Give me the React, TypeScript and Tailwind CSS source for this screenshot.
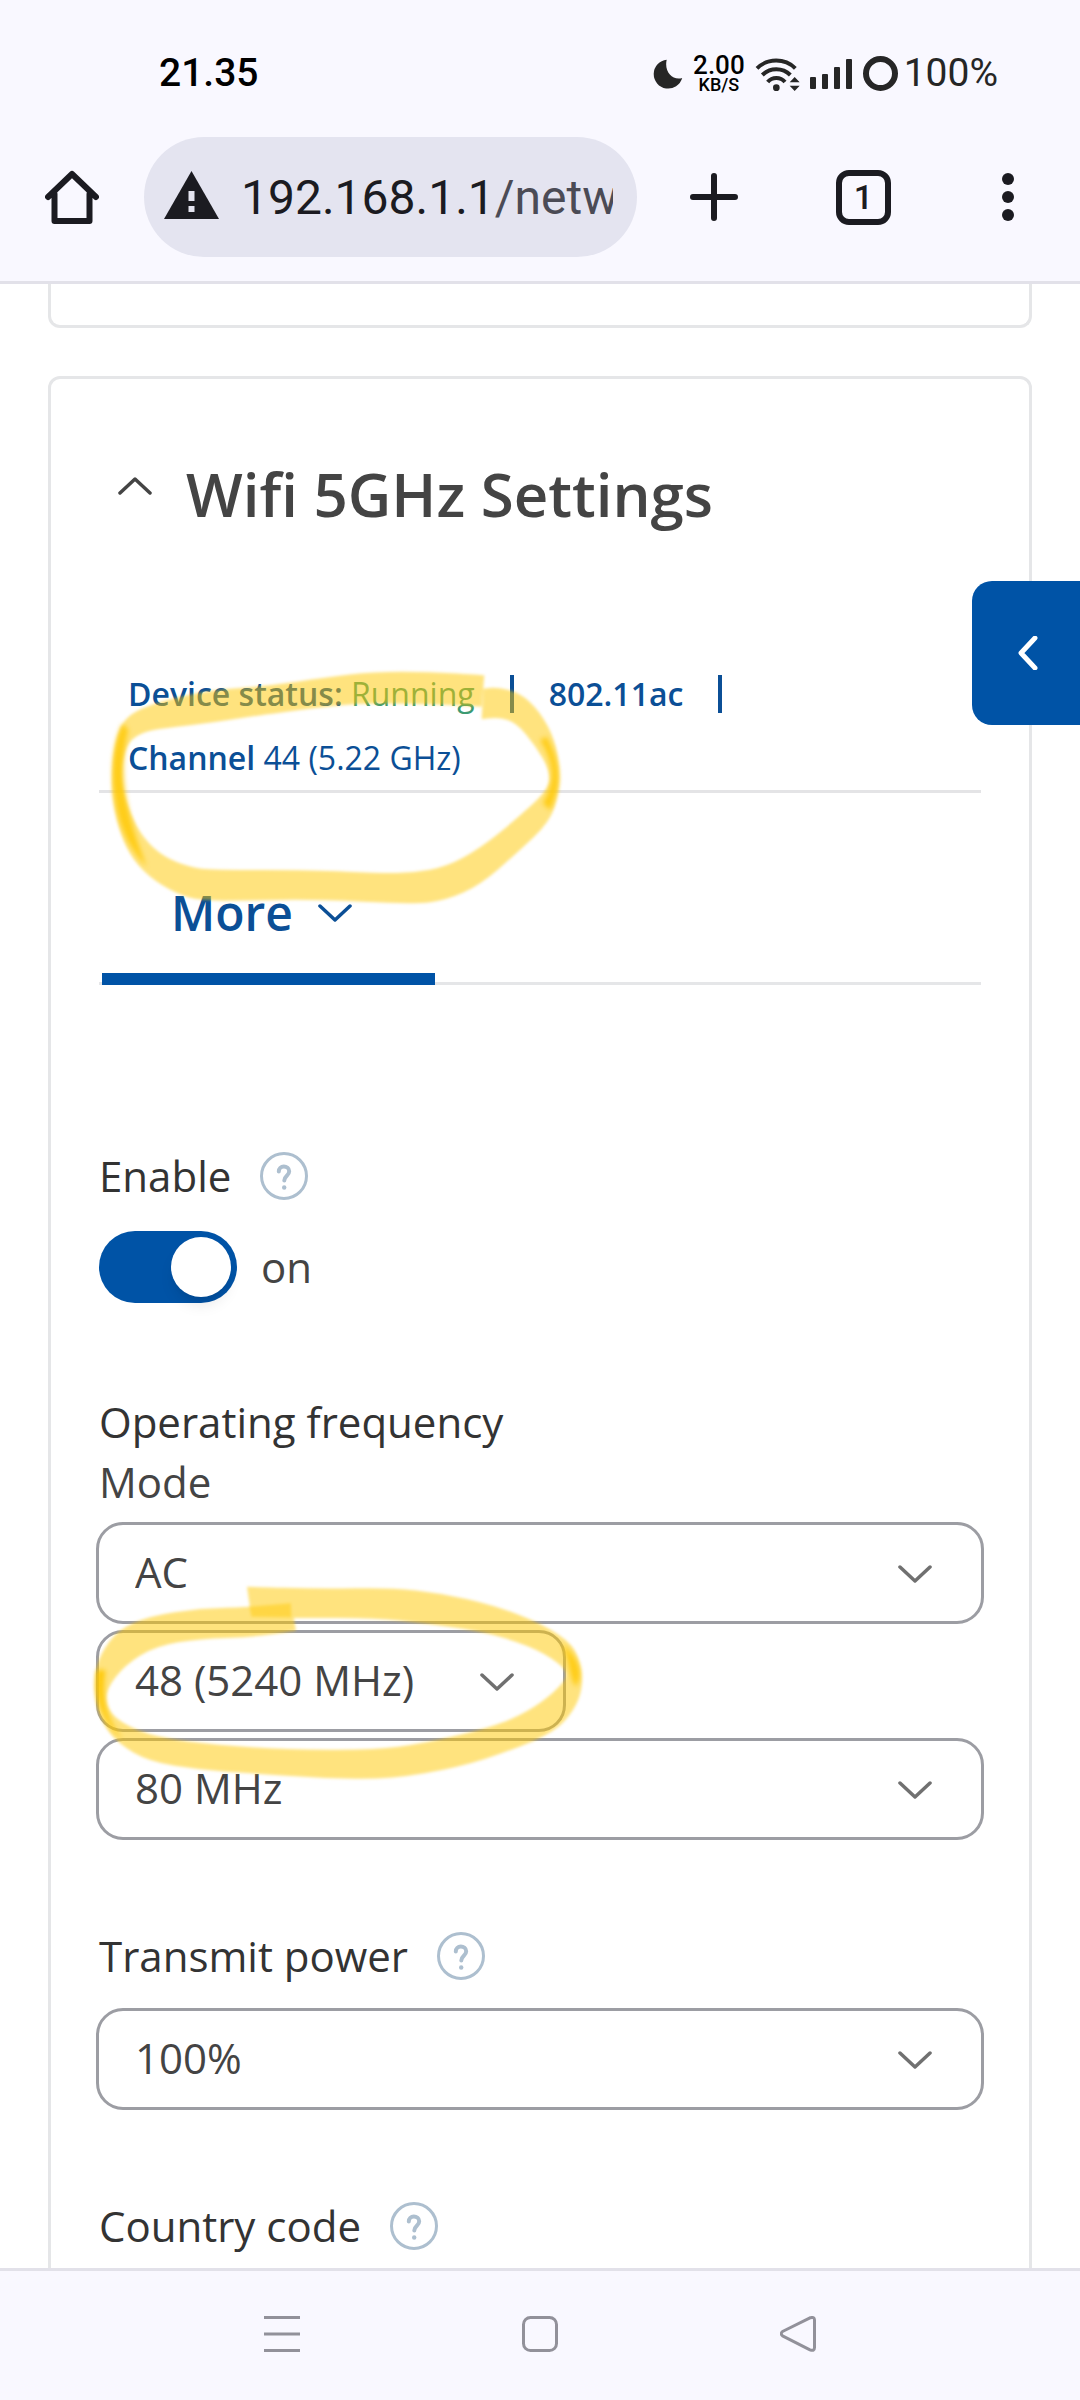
import { useState } from 'react';
import type { ReactNode } from 'react';

type Point = [number, number];

// Closed curve that runs smoothly through the midpoints of the given points
function smoothPath(points: Point[]) {
  const mid = (a: Point, b: Point) => `${(a[0] + b[0]) / 2} ${(a[1] + b[1]) / 2}`;
  const segments = points.map((p, i) => {
    const next = points[(i + 1) % points.length];
    return `Q${p[0]} ${p[1]} ${mid(p, next)}`;
  });
  return `M${mid(points[points.length - 1], points[0])} ${segments.join(' ')}Z`;
}

const STATUS_MARK: Point[] = [
  [1213, 106], [1213, 106], [1050, 95], [880, 95], [740, 112], [560, 138], [400, 150], [300, 170],
  [200, 198], [135, 232], [105, 300], [92, 430], [108, 540], [145, 640], [205, 710], [290, 762],
  [360, 782], [500, 782], [700, 778], [1000, 793], [1100, 780], [1200, 735], [1310, 640], [1410, 545],
  [1436, 460], [1440, 390], [1425, 300], [1380, 215], [1320, 158], [1250, 142], [1210, 146], [1210, 146],
  [1205, 237], [1205, 237], [1260, 232], [1310, 250], [1365, 315], [1411, 395], [1405, 450], [1300, 545],
  [1200, 625], [1100, 680], [1000, 698], [900, 700], [700, 690], [400, 690], [330, 682], [250, 650],
  [190, 595], [150, 520], [124, 440], [124, 370], [145, 305], [190, 276], [260, 263], [400, 248],
  [520, 228], [700, 205], [850, 188], [1100, 195], [1205, 200], [1205, 200],
];

const CHANNEL_MARK: Point[] = [
  [485, 230], [485, 230], [700, 237], [900, 233], [1050, 250], [1200, 285], [1340, 340], [1435, 405],
  [1457, 480], [1458, 540], [1435, 600], [1380, 665], [1250, 722], [1100, 772], [900, 808], [700, 805],
  [500, 790], [350, 780], [200, 755], [110, 700], [65, 640], [45, 580], [40, 500], [60, 430],
  [110, 360], [200, 318], [350, 295], [500, 292], [613, 278], [613, 278], [627, 362], [627, 362],
  [500, 382], [350, 386], [220, 408], [130, 465], [75, 540], [78, 595], [120, 640], [220, 682],
  [400, 705], [600, 718], [850, 720], [1000, 700], [1200, 650], [1300, 605], [1380, 545], [1424, 488],
  [1350, 430], [1250, 388], [1150, 362], [1000, 340], [850, 323], [600, 325], [497, 318], [497, 318],
];

function Chevron({ className, width = 5 }: { className: string; width?: number }) {
  return (
    <svg viewBox="0 0 34 20" className={className} fill="none" stroke="currentColor"
      strokeWidth={width * 0.7} strokeLinecap="round" strokeLinejoin="round">
      <path d="M2 3 17 17 32 3" />
    </svg>
  );
}

function HelpButton({ topic }: { topic: string }) {
  return (
    <button type="button" aria-label={`Help: ${topic}`} className="size-12 text-[#adbfcf]">
      <svg viewBox="0 0 48 48" className="size-12" fill="none" stroke="currentColor">
        <circle cx="24" cy="24" r="22.5" strokeWidth="3" />
        <path d="M18.8 19.5c0-3 2.2-4.9 5-4.9s5.4 1.9 5.4 4.7c0 4.6-4.9 4.3-4.9 9.2" strokeWidth="4" strokeLinecap="round" />
        <circle cx="24.2" cy="35.5" r="2.2" fill="currentColor" stroke="none" />
      </svg>
    </button>
  );
}

interface SelectBoxProps {
  label: string;
  id: string;
  options: string[];
  className?: string;
}

function SelectBox({ label, id, options, className = 'w-full' }: SelectBoxProps) {
  return (
    <div className={`relative ${className}`}>
      <select id={id} aria-label={label}
        className="block h-[102px] w-full appearance-none rounded-[27px] border-3 border-[#9c9da3] bg-white pr-24 pb-[3px] pl-9 text-[42px] text-[#444]">
        {options.map((o) => <option key={o}>{o}</option>)}
      </select>
      <Chevron className="pointer-events-none absolute top-[42px] right-[52px] h-5 w-[34px] text-[#707070]" />
    </div>
  );
}

function FieldLabel({ htmlFor, children }: { htmlFor: string; children: string }) {
  return (
    <div className="flex items-center gap-[29px]">
      <label htmlFor={htmlFor} className="text-[42px] leading-[60px] text-[#333]">{children}</label>
      <HelpButton topic={children} />
    </div>
  );
}

function StatusBar() {
  return (
    <div className="flex h-[137px] items-center justify-between pt-2.5 pr-[82px] pl-[159px] text-[39px] text-[#262626]">
      <span className="font-medium text-black">21.35</span>
      <div className="flex items-center">
        <svg viewBox="97 80 92 93" className="mr-2.5 size-[30px]" fill="currentColor">
          <path d="M139 82A45 45 0 1 0 187 139C158 148 130 120 139 82Z" />
        </svg>
        <div className="mr-2.5 flex flex-col items-center font-medium text-black">
          <span className="text-[26px] leading-[22px]">2.00</span>
          <span className="text-[18px] leading-[18px]">KB/S</span>
        </div>
        <svg viewBox="400 68 135 108" className="mr-2.5 h-9 w-[45px]" fill="none" stroke="currentColor" strokeWidth="12">
          <path d="M406 105A83 83 0 0 1 521 105M422 125A60 60 0 0 1 506 125M438 146A34 34 0 0 1 490 146" />
          <circle cx="464" cy="163" r="10" fill="currentColor" stroke="none" />
          <path d="M519 131 534 147H504ZM519 173 534 157H504Z" fill="currentColor" stroke="none" />
        </svg>
        <svg viewBox="0 0 43 30" className="mr-2.5 h-[30px] w-[43px]" fill="currentColor">
          <rect x="0" y="18" width="6" height="12" rx="1" />
          <rect x="12" y="15" width="6" height="15" rx="1" />
          <rect x="24" y="8" width="6" height="22" rx="1" />
          <rect x="36" y="0" width="6" height="30" rx="1" />
        </svg>
        <span className="mr-1.5 size-[35px] rounded-full border-[6px] border-[#262626]" />
        <span>100%</span>
      </div>
    </div>
  );
}

function BrowserToolbar() {
  return (
    <div className="flex items-center pr-[66px] pb-6 pl-[45px] text-[#1b1b21]">
      <button type="button" aria-label="Home">
        <svg viewBox="0 0 54 54" className="size-[54px]" fill="none" stroke="currentColor" strokeWidth="6" strokeLinecap="round" strokeLinejoin="round">
          <path d="M9.500 24V51H44.500V24M3 27 27 4 51 27" />
        </svg>
      </button>
      <button type="button" aria-label="Address"
        className="mx-[45px] flex h-[120px] min-w-0 flex-1 items-center rounded-full bg-[#e4e4f0] pr-6 pl-5 text-left">
        <svg viewBox="0 0 55 48" className="mb-1 h-12 w-[55px] shrink-0">
          <path d="M27.5 0 55 48H0Z" fill="currentColor" />
          <path d="M24.5 20h6v10h-6zM24.5 35h6v6h-6z" fill="#e4e4f0" />
        </svg>
        <span className="ml-[22px] min-w-0 flex-1 overflow-hidden pt-0.5 text-[48px] whitespace-nowrap">
          192.168.1.1<span className="text-[#4b4b55]">/network</span>
        </span>
      </button>
      <button type="button" aria-label="New tab" className="ml-2">
        <svg viewBox="0 0 48 48" className="size-12" stroke="currentColor" strokeWidth="6" strokeLinecap="round">
          <path d="M24 3V45M3 24H45" />
        </svg>
      </button>
      <button type="button" aria-label="Open tabs"
        className="ml-[98px] flex size-[55px] items-center justify-center rounded-[13px] border-[6px] border-current text-[34px] leading-none font-medium">
        1
      </button>
      <button type="button" aria-label="Menu" className="ml-[111px] flex flex-col gap-1.5">
        <span className="size-3 rounded-full bg-current" />
        <span className="size-3 rounded-full bg-current" />
        <span className="size-3 rounded-full bg-current" />
      </button>
    </div>
  );
}

function NavButton({ label, children }: { label: string; children: ReactNode }) {
  return (
    <button type="button" aria-label={label}>
      <svg viewBox="0 0 36 36" className="size-9" fill="none" stroke="#92919a" strokeWidth="3" strokeLinejoin="round">
        {children}
      </svg>
    </button>
  );
}

function DeviceStatus() {
  return (
    <div className="relative mt-32 flex flex-wrap items-center gap-x-[35px] border-b-3 border-[#e4e4e6] pl-[29px] text-[32px] leading-[64px] text-[#0b4f96]">
      <span>
        <b className="font-semibold">Device status:</b> <span className="text-[#3c9a72]">Running</span>
      </span>
      <span className="h-[38px] w-1 bg-current" />
      <b className="font-semibold">802.11ac</b>
      <span className="h-[38px] w-1 bg-current" />
      <span>
        <b className="font-semibold">Channel</b> 44 (5.22 GHz)
      </span>
      <svg viewBox="0 0 1560 1080" fill="#ffc800"
        className="pointer-events-none absolute -top-[22px] -left-[19px] z-10 h-[360px] w-[520px] max-w-none">
        <filter id="soft"><feGaussianBlur stdDeviation="4" /></filter>
        <filter id="softer" x="-100%" width="300%"><feGaussianBlur stdDeviation="8" /></filter>
        <path d={smoothPath(STATUS_MARK)} opacity=".5" filter="url(#soft)" />
        <path d="M128 250C90 330 90 440 118 540C135 600 170 650 200 680C155 560 105 420 145 270Z" opacity=".8" filter="url(#softer)" />
        <path d="M1400 290C1448 380 1443 440 1410 510L1388 490C1425 430 1425 370 1380 300Z" opacity=".8" filter="url(#softer)" />
      </svg>
    </div>
  );
}

export default function App() {
  const [open, setOpen] = useState(true);
  const [enabled, setEnabled] = useState(true);

  return (
    <div className="flex h-screen flex-col bg-white font-['Open_Sans',sans-serif]">
      <header className="shrink-0 border-b-3 border-[#e2e1e9] bg-[#f9f8ff] font-[Roboto,sans-serif]">
        <StatusBar />
        <BrowserToolbar />
      </header>

      <main className="relative min-h-0 flex-1 overflow-hidden">
        <section className="mx-12 h-11 rounded-b-xl border-3 border-t-0 border-[#e5e6e8]" />

        <section className="mx-12 mt-12 rounded-xl border-3 border-[#e5e6e8] px-12 pt-[75px] pb-40">
          <button type="button" onClick={() => setOpen(!open)} className="flex items-center gap-[34px] pl-[19px] text-[#444]">
            <Chevron className={`mb-4 h-5 w-[34px] ${open ? 'rotate-180' : ''}`} />
            <h2 className="text-[60px] leading-[80px] font-semibold">Wifi 5GHz Settings</h2>
          </button>

          {open && (
            <>
              <DeviceStatus />

              <nav className="mt-[88px] flex border-b-3 border-[#e5e6e8]">
                <button type="button"
                  className="-mb-[3px] ml-[3px] flex w-[333px] items-center gap-[25px] border-b-12 border-[#0053a6] pb-7 pl-[69px] text-[48px] leading-[64px] font-semibold text-[#0b4f96]">
                  More
                  <Chevron className="h-5 w-[34px]" />
                </button>
              </nav>

              <div className="mt-[161px]">
                <FieldLabel htmlFor="enable">Enable</FieldLabel>
                <div className="mt-[25px] flex items-center gap-6">
                  <input id="enable" type="checkbox" role="switch" checked={enabled}
                    onChange={(e) => setEnabled(e.target.checked)}
                    className="flex h-[72px] w-[138px] appearance-none rounded-full bg-[#a5a6ac] p-1.5 before:size-[60px] before:rounded-full before:bg-white before:shadow-lg checked:justify-end checked:bg-[#0053a6]" />
                  <span className="text-[42px] leading-[60px] text-[#444]">{enabled ? 'on' : 'off'}</span>
                </div>
              </div>

              <div className="mt-[89px]">
                <h3 className="text-[42px] leading-[60px] text-[#333]">Operating frequency</h3>
                <label htmlFor="mode" className="block text-[42px] leading-[60px] text-[#444]">Mode</label>
                <div className="relative -mx-[3px] mt-2.5 flex flex-col gap-1.5">
                  <SelectBox id="mode" label="Mode" options={['AC', 'N', 'Legacy']} />
                  <SelectBox id="channel" label="Channel" className="w-[470px]"
                    options={['48 (5240 MHz)', '44 (5220 MHz)', '40 (5200 MHz)', '36 (5180 MHz)']} />
                  <SelectBox id="width" label="Width" options={['80 MHz', '40 MHz', '20 MHz']} />
                  <svg viewBox="0 0 1568 1020" preserveAspectRatio="none" fill="#ffc800"
                    className="pointer-events-none absolute -top-3 -left-4 z-10 h-[340px] w-[540px] max-w-none overflow-visible">
                    <path d={smoothPath(CHANNEL_MARK)} opacity=".5" filter="url(#soft)" />
                    <path d="M492 290 612 280 614 322 498 320Z" opacity=".45" filter="url(#soft)" />
                    <path d="M50 480C40 560 58 630 125 690C75 620 62 570 74 480Z" opacity=".9" filter="url(#softer)" />
                    <path d="M1400 400C1460 455 1460 500 1440 530C1422 510 1425 470 1400 400Z" opacity=".8" filter="url(#softer)" />
                  </svg>
                </div>
              </div>

              <div className="mt-[86px]">
                <FieldLabel htmlFor="power">Transmit power</FieldLabel>
                <div className="-mx-[3px] mt-[22px]">
                  <SelectBox id="power" label="Transmit power" options={['100%', '75%', '50%', '25%']} />
                </div>
              </div>

              <div className="mt-[86px]">
                <FieldLabel htmlFor="country">Country code</FieldLabel>
                <div className="-mx-[3px] mt-[22px]">
                  <SelectBox id="country" label="Country code" options={['Indonesia', 'Lithuania']} />
                </div>
              </div>
            </>
          )}
        </section>

        {/* Side drawer handle, floats over the page edge */}
        <button type="button" aria-label="Open side panel"
          className="absolute top-[297px] right-0 flex h-36 w-[108px] items-center justify-center rounded-l-[20px] bg-[#0053a6] pl-1 text-white">
          <Chevron width={7} className="h-5 w-[34px] rotate-90" />
        </button>
      </main>

      <footer className="flex h-[132px] shrink-0 items-start justify-around border-t-3 border-[#e2e1e9] bg-[#f9f8ff] px-[153px] pt-[45px]">
        <NavButton label="Recent apps"><path d="M0 1.5H36M0 18H36M0 34.5H36" /></NavButton>
        <NavButton label="Home screen"><rect x="1.5" y="1.5" width="33" height="33" rx="7" /></NavButton>
        <NavButton label="Back"><path d="M2.5 15.5 30 1.8Q34.5 0.5 34.5 4V31.5Q34.5 35.5 30 33.8L2.5 19.8Q0 18 2.5 15.5Z" /></NavButton>
      </footer>
    </div>
  );
}
